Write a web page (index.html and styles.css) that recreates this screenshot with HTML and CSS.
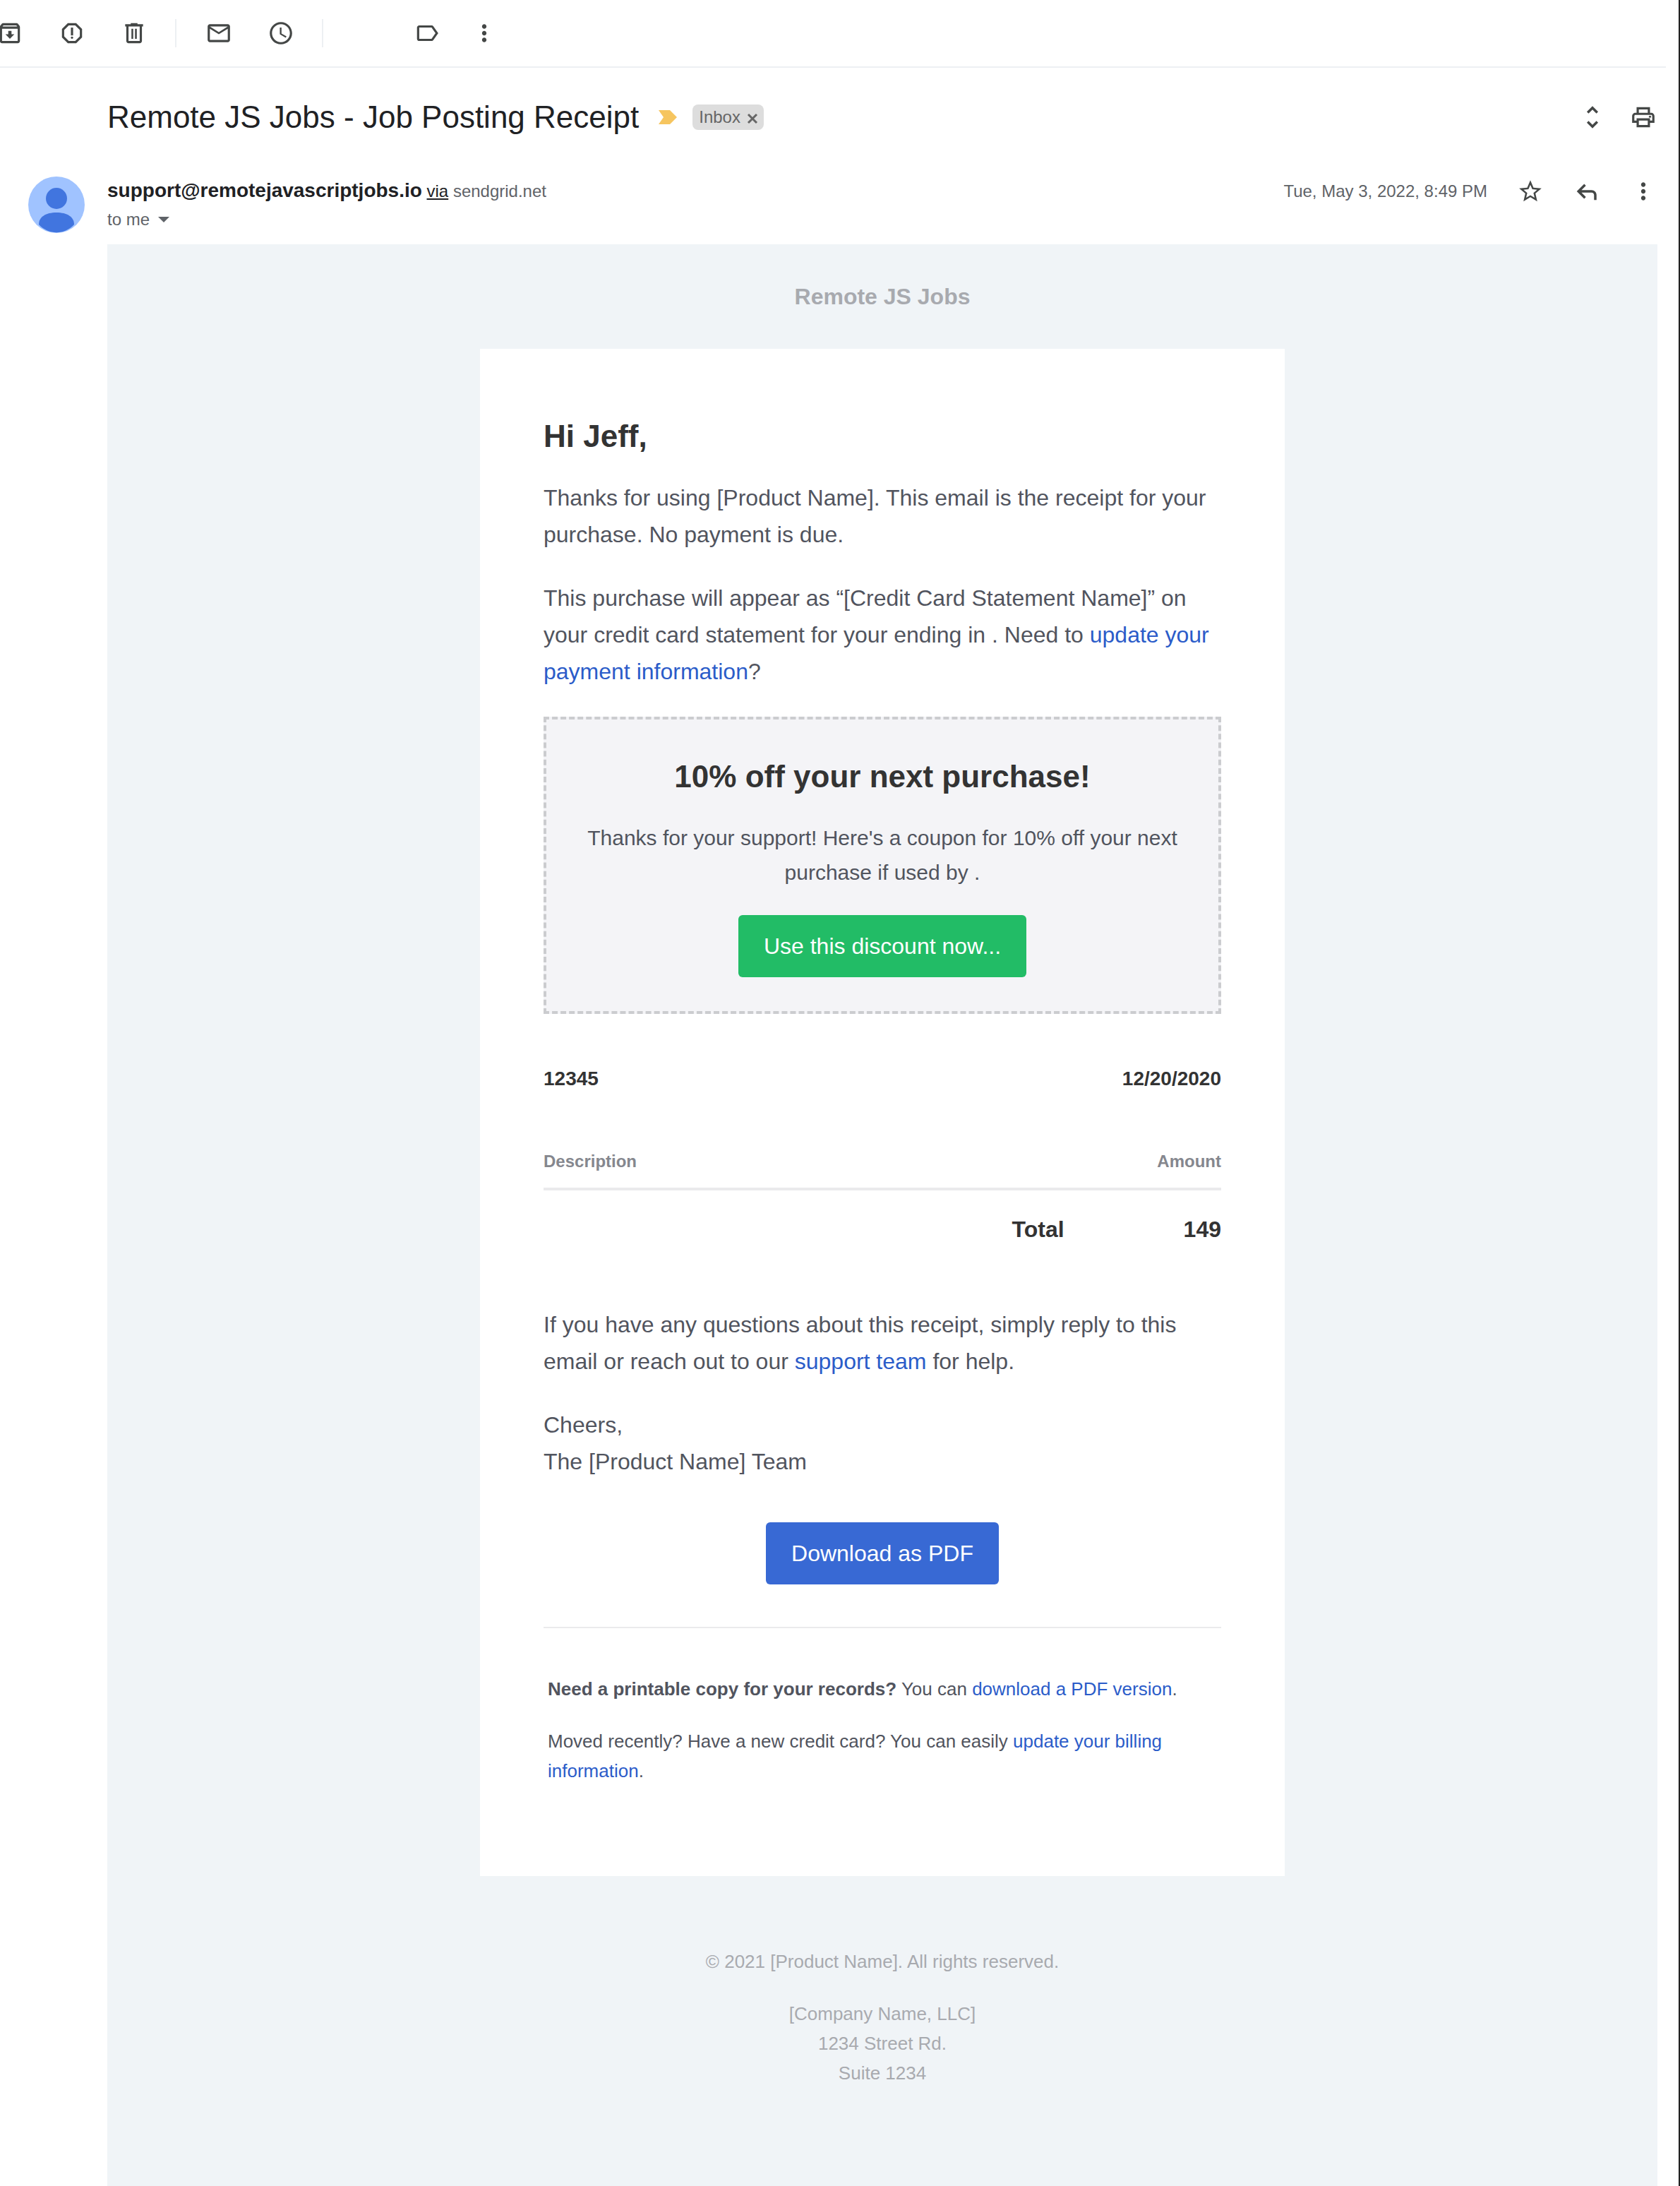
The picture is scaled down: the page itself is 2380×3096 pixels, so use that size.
FILE: index.html
```html
<!DOCTYPE html>
<html lang="en">
<head>
<meta charset="UTF-8">
<meta name="viewport" content="width=device-width, initial-scale=1.0">
<title>Remote JS Jobs - Job Posting Receipt</title>
<link rel="stylesheet" href="styles.css">
</head>
<body>

<div class="page">
  <div class="toolbar">
    <div class="tool tool-first">
      <svg class="icon" viewBox="0 0 24 24"><path d="M20.54 5.23l-1.39-1.68C18.88 3.21 18.47 3 18 3H6c-.47 0-.88.21-1.16.55L3.46 5.23C3.17 5.57 3 6.02 3 6.5V19c0 1.1.9 2 2 2h14c1.1 0 2-.9 2-2V6.5c0-.48-.17-.93-.46-1.27zM6.24 5h11.52l.81.97H5.44l.8-.97zM5 19V8h14v11H5zm8.45-9h-2.9v3H8l4 4 4-4h-2.55z"/></svg>
    </div>
    <div class="tool">
      <svg class="icon" viewBox="0 0 24 24"><path d="M15.73 3H8.27L3 8.27v7.46L8.27 21h7.46L21 15.73V8.27L15.73 3zM19 14.9L14.9 19H9.1L5 14.9V9.1L9.1 5h5.8L19 9.1v5.8z"/><circle cx="12" cy="16" r="1"/><path d="M11 7h2v7h-2z"/></svg>
    </div>
    <div class="tool">
      <svg class="icon" viewBox="0 0 24 24"><path d="M15 4V3H9v1H4v2h1v13c0 1.1.9 2 2 2h10c1.1 0 2-.9 2-2V6h1V4h-5zm2 15H7V6h10v13zM9.6 8h1.6v9H9.6zm3.2 0h1.6v9h-1.6z"/></svg>
    </div>
    <div class="tool-sep"></div>
    <div class="tool">
      <svg class="icon" viewBox="0 0 24 24"><path d="M20 4H4c-1.1 0-2 .9-2 2v12c0 1.1.9 2 2 2h16c1.1 0 2-.9 2-2V6c0-1.1-.9-2-2-2zm0 14H4V8l8 5 8-5v10zm-8-7L4 6h16l-8 5z"/></svg>
    </div>
    <div class="tool">
      <svg class="icon" viewBox="0 0 24 24"><path d="M11.99 2C6.47 2 2 6.48 2 12s4.47 10 9.99 10C17.52 22 22 17.52 22 12S17.52 2 11.99 2zM12 20c-4.42 0-8-3.58-8-8s3.58-8 8-8 8 3.58 8 8-3.58 8-8 8z"/><path d="M12.5 7H11v6l5.25 3.15.75-1.23-4.5-2.67z"/></svg>
    </div>
    <div class="tool-sep"></div>
    <div class="tool tool-label">
      <svg class="icon" viewBox="0 0 24 24"><path d="M17.63 5.84C17.27 5.33 16.67 5 16 5L5 5.01C3.9 5.01 3 5.9 3 7v10c0 1.1.9 1.99 2 1.99L16 19c.67 0 1.27-.33 1.63-.84L22 12l-4.37-6.16zM16 17H5V7h11l3.55 5L16 17z"/></svg>
    </div>
    <div class="tool tool-more">
      <svg class="icon" viewBox="0 0 24 24"><path d="M12 8c1.1 0 2-.9 2-2s-.9-2-2-2-2 .9-2 2 .9 2 2 2zm0 2c-1.1 0-2 .9-2 2s.9 2 2 2 2-.9 2-2-.9-2-2-2zm0 6c-1.1 0-2 .9-2 2s.9 2 2 2 2-.9 2-2-.9-2-2-2z"/></svg>
    </div>
  </div>

  <div class="subject-row">
    <h2 class="subject">Remote JS Jobs - Job Posting Receipt</h2>
    <svg class="marker" viewBox="0 0 26 20"><polygon points="0,0 16,0 26,10 16,20 0,20 7,10"/></svg>
    <span class="chip">Inbox <svg class="chip-x" viewBox="0 0 16 16"><path d="M2 2l12 12M14 2L2 14"/></svg></span>
    <div class="subject-actions">
      <svg class="icon icon-unfold" viewBox="0 0 24 24"><path d="M12 5.83L15.17 9l1.41-1.41L12 3 7.41 7.59 8.83 9 12 5.83zm0 12.34L8.83 15l-1.41 1.41L12 21l4.59-4.59L15.17 15 12 18.17z"/></svg>
      <svg class="icon" viewBox="0 0 24 24"><path d="M19 8h-1V3H6v5H5c-1.66 0-3 1.34-3 3v6h4v4h12v-4h4v-6c0-1.66-1.34-3-3-3zM8 5h8v3H8V5zm8 14H8v-4h8v4zm2-4v-2H6v2H4v-4c0-.55.45-1 1-1h14c.55 0 1 .45 1 1v4h-2z"/><circle cx="18" cy="11.5" r="1"/></svg>
    </div>
  </div>

  <div class="sender-row">
    <svg class="avatar" viewBox="0 0 80 80">
      <circle cx="40" cy="40" r="40" fill="#a0c3ff"/>
      <ellipse cx="40" cy="31" rx="15" ry="15" fill="#4175df"/>
      <path d="M15 68c0-11 10-17 25-17s25 6 25 17c-14 15-36 15-50 0z" fill="#4175df"/>
    </svg>
    <div class="sender-info">
      <div class="sender-line"><b class="sender-mail">support@remotejavascriptjobs.io</b> <u class="via">via</u> <span class="via-host">sendgrid.net</span></div>
      <div class="to-line">to me <span class="caret"></span></div>
    </div>
    <div class="sender-meta">
      <span class="date">Tue, May 3, 2022, 8:49 PM</span>
      <svg class="icon icon-star" viewBox="0 0 24 24"><path d="M22 9.24l-7.19-.62L12 2 9.19 8.63 2 9.24l5.46 4.73L5.82 21 12 17.27 18.18 21l-1.63-7.03L22 9.24zM12 15.4l-3.76 2.27 1-4.28-3.32-2.88 4.38-.38L12 6.1l1.71 4.04 4.38.38-3.32 2.88 1 4.28L12 15.4z"/></svg>
      <svg class="icon icon-reply" viewBox="0 0 24 24"><path d="M21 19h-2v-4c0-1.1-.9-2-2-2H8.83l3.58 3.59L11 18l-6-6 6-6 1.41 1.41L8.83 11H17c2.21 0 4 1.79 4 4v4z"/></svg>
      <svg class="icon" viewBox="0 0 24 24"><path d="M12 8c1.1 0 2-.9 2-2s-.9-2-2-2-2 .9-2 2 .9 2 2 2zm0 2c-1.1 0-2 .9-2 2s.9 2 2 2 2-.9 2-2-.9-2-2-2zm0 6c-1.1 0-2 .9-2 2s.9 2 2 2 2-.9 2-2-.9-2-2-2z"/></svg>
    </div>
  </div>

  <div class="email">
    <div class="masthead">Remote JS Jobs</div>

    <div class="card">
      <h1>Hi Jeff,</h1>
      <p>Thanks for using [Product Name]. This email is the receipt for your purchase. No payment is due.</p>
      <p>This purchase will appear as “[Credit Card Statement Name]” on your credit card statement for your ending in . Need to <a href="#">update your payment information</a>?</p>

      <div class="discount">
        <h1 class="discount-title">10% off your next purchase!</h1>
        <p class="discount-text">Thanks for your support! Here's a coupon for 10% off your next purchase if used by .</p>
        <a class="button button-green" href="#">Use this discount now...</a>
      </div>

      <div class="purchase-head">
        <span>12345</span>
        <span>12/20/2020</span>
      </div>
      <div class="purchase-cols">
        <span>Description</span>
        <span>Amount</span>
      </div>
      <div class="purchase-total">
        <span class="total-label">Total</span>
        <span>149</span>
      </div>

      <p>If you have any questions about this receipt, simply reply to this email or reach out to our <a href="#">support team</a> for help.</p>
      <p>Cheers,<br>The [Product Name] Team</p>

      <div class="download">
        <a class="button button-blue" href="#">Download as PDF</a>
      </div>

      <div class="sub">
        <p><b>Need a printable copy for your records?</b> You can <a href="#">download a PDF version</a>.</p>
        <p>Moved recently? Have a new credit card? You can easily <a href="#">update your billing information</a>.</p>
      </div>
    </div>

    <div class="footer">
      <p>© 2021 [Product Name]. All rights reserved.</p>
      <p>[Company Name, LLC]<br>1234 Street Rd.<br>Suite 1234</p>
    </div>
  </div>
</div>

</body>
</html>
```

FILE: styles.css
```css
body {
  font-family: 'Liberation Sans', Arial, sans-serif;
  background-color: #ffffff;
  margin: 0;
  padding: 0;
  overflow: hidden;
}

.page {
  height: 3096px;
  box-sizing: border-box;
  border-right: 2px solid #222;
  display: flex;
  flex-direction: column;
  overflow: hidden;
}

.icon {
  width: 38px;
  height: 38px;
  fill: #444746;
  flex: none;
}

/* top toolbar */
.toolbar {
  width: 2390px;
  height: 94px;
  border-bottom: 2px solid #edf0f3;
  display: flex;
  align-items: center;
  flex: none;
  margin-left: -30px;
}

.tool {
  width: 88px;
  height: 48px;
  display: flex;
  align-items: center;
  justify-content: center;
}

.tool-sep {
  width: 2px;
  height: 40px;
  background-color: #edf0f3;
  margin: 0 16px 0 14px;
}

.tool-label {
  margin-left: 87px;
}

.tool-more {
  width: 40px;
  margin-left: 17px;
}

/* subject */
.subject-row {
  height: 140px;
  margin: 0 31px 0 152px;
  display: flex;
  align-items: center;
  flex: none;
}

.subject {
  font-size: 44px;
  font-weight: normal;
  color: #202124;
  margin: 0;
}

.marker {
  width: 26px;
  height: 20px;
  margin-left: 28px;
  fill: #f6c55f;
}

.chip {
  height: 36px;
  margin-left: 22px;
  padding: 0 8px 0 9px;
  background-color: #dddddd;
  border-radius: 8px;
  color: #666666;
  font-size: 24px;
  display: flex;
  align-items: center;
}

.chip-x {
  width: 16px;
  height: 16px;
  margin: 3px 0 0 9px;
  stroke: #666666;
  stroke-width: 3;
  fill: none;
}

.subject-actions {
  margin-left: auto;
  display: flex;
  align-items: center;
  gap: 32px;
}

.icon-unfold {
  width: 42px;
  height: 42px;
}

/* sender */
.sender-row {
  height: 110px;
  margin: 0 31px 0 40px;
  display: flex;
  flex: none;
}

.avatar {
  width: 80px;
  height: 80px;
  margin-top: 14px;
  flex: none;
}

.sender-info {
  margin-left: 32px;
  padding-top: 16px;
}

.sender-line {
  font-size: 24px;
  line-height: 36px;
  color: #5f6368;
}

.sender-mail {
  font-size: 28px;
  color: #202124;
}

.via {
  color: #202124;
}

.to-line {
  font-size: 24px;
  line-height: 36px;
  margin-top: 4px;
  color: #5f6368;
  display: flex;
  align-items: center;
}

.caret {
  width: 0;
  height: 0;
  margin-left: 12px;
  border-left: 8px solid transparent;
  border-right: 8px solid transparent;
  border-top: 8px solid #5f6368;
}

.sender-meta {
  margin-left: auto;
  height: 70px;
  display: flex;
  align-items: center;
}

.date {
  font-size: 24px;
  color: #5f6368;
  margin-right: 42px;
}

.icon-star {
  margin-right: 38px;
}

.icon-reply {
  width: 42px;
  height: 42px;
  margin-right: 42px;
}

/* email body */
.email {
  margin: 0 30px 0 152px;
  flex: 1;
  background-color: #f0f4f7;
}

.masthead {
  height: 148px;
  line-height: 148px;
  text-align: center;
  font-size: 32px;
  font-weight: bold;
  color: #a8aaaf;
}

.card {
  width: 1140px;
  box-sizing: border-box;
  margin: 0 auto;
  padding: 92px 90px 96px;
  background-color: #ffffff;
  color: #51545e;
  font-size: 32px;
  line-height: 52px;
}

.card h1 {
  margin: 0 0 29px;
  font-size: 44px;
  line-height: 64px;
  color: #333333;
}

.card p {
  margin: 0 0 38px;
}

a {
  color: #2b5cc9;
  text-decoration: none;
}

.discount {
  padding: 49px 48px 48px;
  border: 4px dashed #cbcccf;
  background-color: #f4f4f7;
  text-align: center;
}

.card .discount-title {
  margin: 0 0 30px;
  line-height: 64px;
}

.card .discount-text {
  margin: 0 0 36px;
  font-size: 30px;
  line-height: 49px;
}

.button {
  display: block;
  width: fit-content;
  margin: 0 auto;
  padding: 18px 36px;
  border-radius: 6px;
  color: #ffffff;
}

.button-green {
  background-color: #22bc66;
}

.button-blue {
  background-color: #3869d4;
}

.purchase-head {
  margin-top: 66px;
  display: flex;
  justify-content: space-between;
  font-size: 28px;
  font-weight: bold;
  color: #333333;
}

.purchase-cols {
  margin-top: 65px;
  padding-bottom: 11px;
  border-bottom: 4px solid #eaeaec;
  display: flex;
  justify-content: space-between;
  font-size: 24px;
  font-weight: bold;
  color: #85878e;
}

.purchase-total {
  margin: 29px 0 83px;
  display: flex;
  justify-content: flex-end;
  font-weight: bold;
  color: #333333;
}

.total-label {
  margin-right: 169px;
}

.download {
  margin-top: 60px;
  padding-bottom: 60px;
  border-bottom: 2px solid #eaeaec;
  text-align: center;
}

.sub {
  margin-top: 65px;
  padding: 0 6px;
  font-size: 26px;
  line-height: 42px;
}

.card .sub p {
  margin: 0 0 32px;
}

.footer {
  padding-top: 100px;
  text-align: center;
  font-size: 26px;
  line-height: 42px;
  color: #a8aaaf;
}

.footer p {
  margin: 0 0 32px;
}
```
